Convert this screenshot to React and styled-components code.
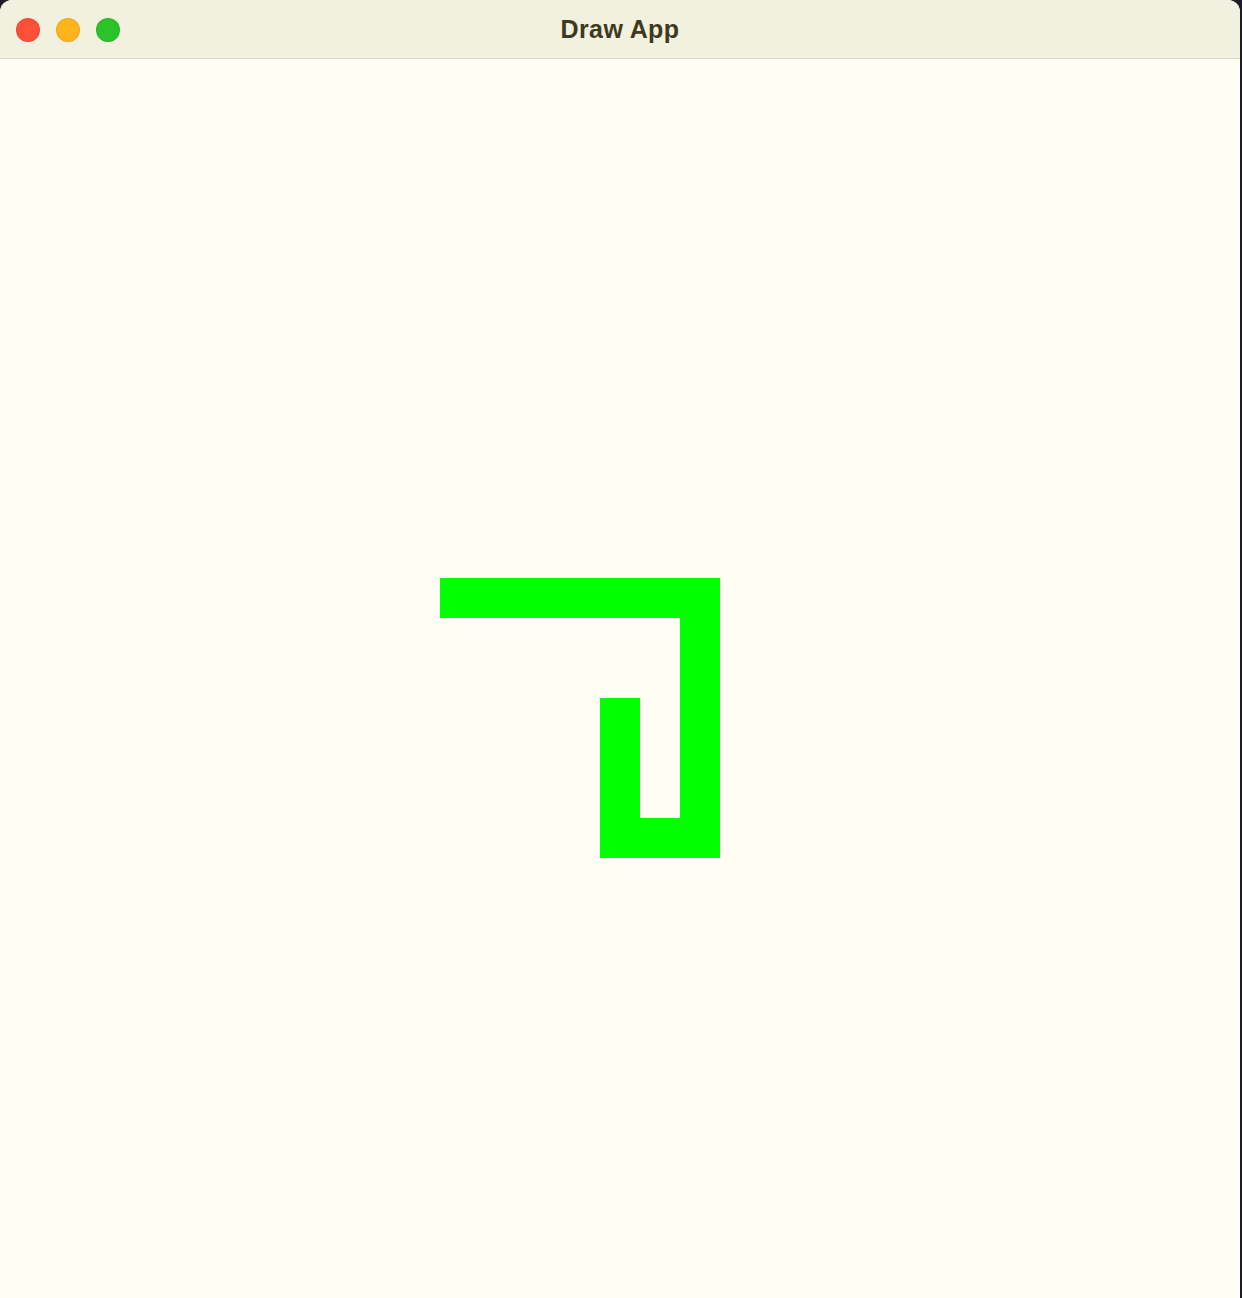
import React from 'react';
import styled, { createGlobalStyle } from 'styled-components';

const GlobalStyle = createGlobalStyle`
  html, body {
    margin: 0;
    padding: 0;
    background: #1b1b2b;
  }
`;

const Window = styled.div`
  width: 1240px;
  height: 1298px;
  display: flex;
  flex-direction: column;
  background: #fefef5;
  border-radius: 12px 12px 0 0;
  overflow: hidden;
  font-family: "Liberation Sans", Arial, sans-serif;
`;

const TitleBar = styled.div`
  position: relative;
  height: 58px;
  flex: none;
  display: flex;
  align-items: center;
  justify-content: center;
  background: #f2f0de;
  border-bottom: 1px solid #d9d7c6;
`;

const Lights = styled.div`
  position: absolute;
  left: 16px;
  top: 18px;
  display: flex;
  gap: 16px;
`;

const Light = styled.span`
  width: 24px;
  height: 24px;
  border-radius: 50%;
  background: ${p => p.color};
  box-shadow: inset 0 0 0 1px rgba(0, 0, 0, 0.08);
`;

const Title = styled.h1`
  margin: 0;
  font-size: 25px;
  letter-spacing: 0.4px;
  font-weight: bold;
  color: #3d3a1e;
`;

const Canvas = styled.div`
  flex: 1;
  position: relative;
`;

const Drawing = styled.svg`
  display: block;
`;

// snake cells, 40px grid, in canvas coordinates
const strokes = [
  { x: 440, y: 519, w: 280, h: 40 },
  { x: 680, y: 519, w: 40, h: 280 },
  { x: 600, y: 759, w: 120, h: 40 },
  { x: 600, y: 639, w: 40, h: 160 },
];

const App = () => {
  return (
    <>
      <GlobalStyle />
      <Window>
        <TitleBar>
          <Lights>
            <Light color="#ff4f36" />
            <Light color="#ffb41c" />
            <Light color="#2bc22a" />
          </Lights>
          <Title>Draw App</Title>
        </TitleBar>
        <Canvas>
          <Drawing width="1240" height="1239" viewBox="0 0 1240 1239">
            {strokes.map((s, i) => (
              <rect key={i} x={s.x} y={s.y} width={s.w} height={s.h} fill="#00ff00" />
            ))}
          </Drawing>
        </Canvas>
      </Window>
    </>
  );
};

export default App;
